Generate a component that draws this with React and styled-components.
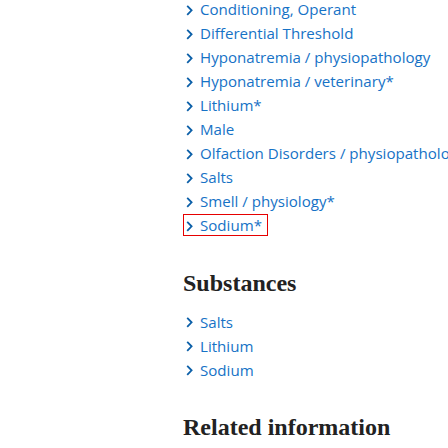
import React from "react";
import styled, { createGlobalStyle } from "styled-components";

const Global = createGlobalStyle`
  html, body { margin: 0; padding: 0; background: #fff; }
  body { font-family: "Open Sans", "Noto Sans", sans-serif; overflow: hidden; }
`;

const Page = styled.div`
  width: 448px;
  height: 448px;
  overflow: hidden;
  padding-left: 184px;
  box-sizing: border-box;
`;

const Content = styled.div`
  margin-top: -3px;
`;

const List = styled.ul`
  list-style: none;
  margin: 0;
  padding: 0;
`;

const Row = styled.li`
  height: 24px;
  display: flex;
  align-items: center;
  white-space: nowrap;
`;

const Link = styled.a`
  display: inline-flex;
  align-items: center;
  height: 20px;
  padding: 0 5px 0 2px;
  color: #1672c6;
  font-size: 15.1px;
  line-height: 20px;
  text-decoration: none;
  outline: ${(p) => (p.$active ? "1px solid #e60000" : "none")};
`;

const Chevron = styled.svg`
  width: 7px;
  height: 11px;
  margin-right: 7px;
  flex: none;
  position: relative;
  top: 1px;
`;

const Heading = styled.h2`
  margin: ${(p) => p.$top}px 0 12px -1px;
  font-family: "Liberation Serif", "Times New Roman", serif;
  font-weight: 700;
  font-size: 24px;
  line-height: 28.8px;
  color: #222;
`;

const Arrow = () => (
  <Chevron viewBox="0 0 7 11">
    <path d="M1.2 0.8 L5.6 5.3 L1.2 9.8" fill="none" stroke="#0b5fa8" strokeWidth="1.8" />
  </Chevron>
);

const main = [
  "Conditioning, Operant",
  "Differential Threshold",
  "Hyponatremia / physiopathology",
  "Hyponatremia / veterinary*",
  "Lithium*",
  "Male",
  "Olfaction Disorders / physiopathology",
  "Salts",
  "Smell / physiology*",
  "Sodium*",
];

const substances = ["Salts", "Lithium", "Sodium"];

export default function App() {
  return (
    <Page>
      <Global />
      <Content>
        <List>
          {main.map((t, i) => (
            <Row key={t}>
              <Link href="#" $active={i === main.length - 1}>
                <Arrow />
                {t}
              </Link>
            </Row>
          ))}
        </List>
        <Heading $top={32}>Substances</Heading>
        <List>
          {substances.map((t) => (
            <Row key={t}>
              <Link href="#">
                <Arrow />
                {t}
              </Link>
            </Row>
          ))}
        </List>
        <Heading $top={31}>Related information</Heading>
      </Content>
    </Page>
  );
}
